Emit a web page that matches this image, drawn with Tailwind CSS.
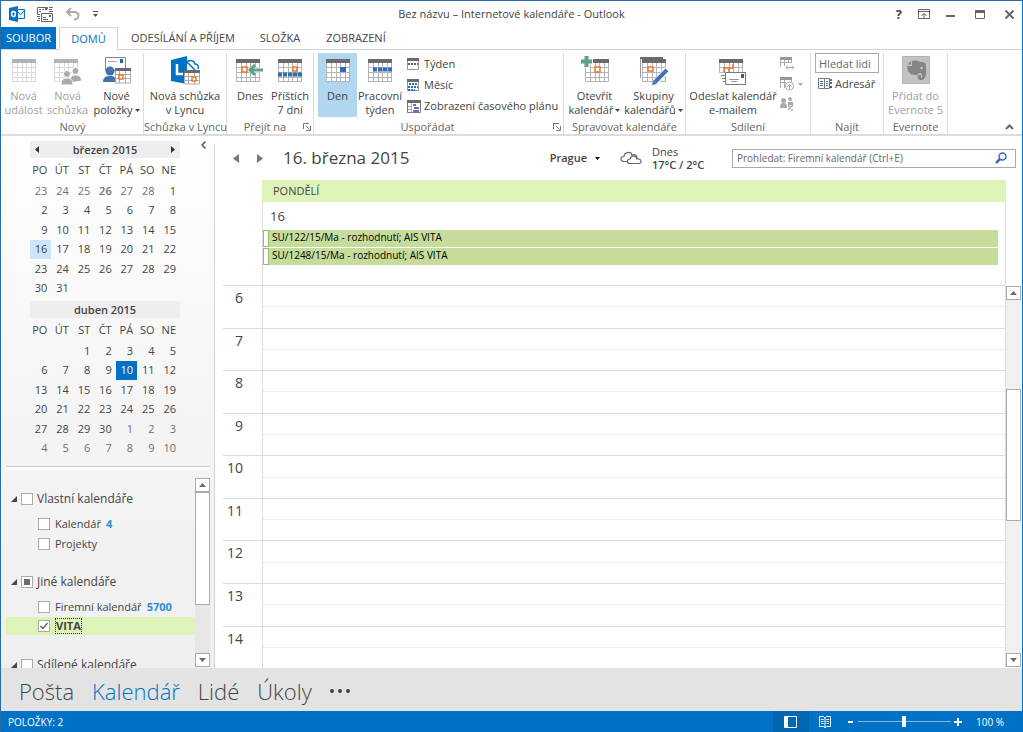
<!DOCTYPE html>
<html lang="cs">
<head>
<meta charset="utf-8">
<meta name="viewport" content="width=device-width, initial-scale=1">
<title>Bez názvu – Internetové kalendáře - Outlook</title>
<script src="https://cdn.jsdelivr.net/npm/@tailwindcss/browser@4"></script>
</head>
<body class="font-['Open_Sans','Noto_Sans',sans-serif] text-[11px] leading-[14px] text-[#444444]">
<svg class="hidden" aria-hidden="true">
  <symbol id="cal" viewBox="0 0 24 24">
    <path fill="#fff" d="M0 0h24v23H0z"/>
    <path fill="none" stroke="#b4b4b4" d="M.5 4v18.500h23V4M0 8.500h24M0 13.500h24M0 18.500h24M5.500 4v18M10.500 4v18M14.500 4v18M19.500 4v18"/>
    <path fill="#6a6a6a" d="M0 0h24v4H0z"/>
  </symbol>
  <symbol id="calsm" viewBox="0 0 12 12">
    <path fill="#fff" d="M0 0h12v12H0z"/>
    <path fill="none" stroke="#999" d="M.5 2v9.500h11V2"/>
    <path fill="#6a6a6a" d="M0 0h12v3H0z"/>
  </symbol>
  <symbol id="caret" viewBox="0 0 5 3"><path fill="currentColor" d="M0 0h5L2.500 3z"/></symbol>
  <symbol id="up" viewBox="0 0 7 4"><path fill="#6b6b6b" d="M0 4h7L3.500 0z"/></symbol>
  <symbol id="down" viewBox="0 0 7 4"><path fill="#6b6b6b" d="M0 0h7L3.500 4z"/></symbol>
  <symbol id="tree" viewBox="0 0 6 6"><path fill="#444" d="M6 0v6H0z"/></symbol>
  <symbol id="launch" viewBox="0 0 8 8"><path fill="none" stroke="#777" d="M.5 6V.5H6M3 3l3.500 3.500M7.500 3v4.500H3"/></symbol>
</svg>

<div class="flex h-screen flex-col overflow-hidden border border-b-0 border-[#2b6ca8] border-r-[#0072c6] bg-white">
  <!-- Title bar -->
  <header class="grid h-[26px] shrink-0 grid-cols-[1fr_auto_1fr] items-center">
    <div class="flex items-center pl-2 gap-3">
      <svg class="size-4" viewBox="0 0 16 16"><path fill="#fff" stroke="#0072c6" d="M8.500 3.500h7v9h-7"/><path fill="none" stroke="#0072c6" d="M9 6l2.500 3L15.500 4"/><path fill="#0072c6" d="M0 2l9-2v16l-9-2z"/><ellipse cx="4.500" cy="8" rx="1.900" ry="2.600" fill="none" stroke="#fff" stroke-width="1.500"/></svg>
      <button class="cursor-pointer" aria-label="Odeslat a přijmout"><svg class="size-4" viewBox="0 0 16 16" fill="none" stroke="#666"><path d="M3 8.500H.5v-7h10V3"/><path d="M2 3.500h2M5 3.500h2M2 5.500h2M4.500 15.500v-8h11v8zM6 13.500h5M6 11.500h3M12 1.500h4M12 3.500h3M12 5.500h4M0 10.500h3M1 12.500h2M0 14.500h3"/><path fill="#666" stroke="none" d="M12 9h2v2h-2zM8 2h2v2H8z"/></svg></button>
      <button class="cursor-pointer" aria-label="Zpět"><svg class="h-4 w-4" viewBox="0 0 16 16" fill="none" stroke="#ababab" stroke-width="2"><path d="M6 2L2 6l4 4M2.500 6H9c3 0 4.500 1.500 4.500 3.500S12 13.500 9 13.500"/></svg></button>
      <button class="cursor-pointer" aria-label="Přizpůsobit panel"><svg class="h-[6px] w-[5px]" viewBox="0 0 5 6"><path fill="#555" d="M0 0h5v1H0zM0 3h5L2.500 6z"/></svg></button>
    </div>
    <h1 class="text-[11px]">Bez názvu – Internetové kalendáře - Outlook</h1>
    <div class="flex items-center justify-end gap-4 pr-2">
      <button class="text-[13px] font-bold" aria-label="Nápověda">?</button>
      <button aria-label="Zobrazení pásu karet"><svg class="h-[10px] w-3" viewBox="0 0 12 10"><path fill="none" stroke="#666" d="M.5.5h11v9H.5zM.5 2.500h11M6 9V5M3.500 6.500L6 4.500l2.500 2"/></svg></button>
      <button aria-label="Minimalizovat"><svg class="h-[10px] w-[9px]" viewBox="0 0 9 10"><path fill="#666" d="M0 6h9v2H0z"/></svg></button>
      <button class="ml-1" aria-label="Maximalizovat"><svg class="h-[9px] w-[10px]" viewBox="0 0 10 9"><path fill="none" stroke="#666" d="M.5.500h9v8h-9z"/><path fill="#666" d="M0 0h10v3H0z"/></svg></button>
      <button class="ml-1" aria-label="Zavřít"><svg class="size-[9px]" viewBox="0 0 9 9"><path stroke="#666" stroke-width="2" d="M.5.500l8 8M8.500.500l-8 8"/></svg></button>
    </div>
  </header>

  <!-- Ribbon tabs -->
  <nav class="flex h-[23px] shrink-0 items-stretch border-b border-[#d4d4d4] text-[11px] whitespace-nowrap">
    <button class="w-[55px] bg-[#0072c6] text-white">SOUBOR</button>
    <button class="-mb-px ml-[3px] w-[59px] border border-b-0 border-[#d4d4d4] bg-white text-[#0072c6]">DOMŮ</button>
    <button class="ml-[10px] w-[110px]">ODESÍLÁNÍ A PŘÍJEM</button>
    <button class="ml-4 w-[52px]">SLOŽKA</button>
    <button class="ml-4 w-[68px]">ZOBRAZENÍ</button>
  </nav>

  <!-- Ribbon -->
  <section class="flex h-[86px] shrink-0 border-b-2 border-[#dcdcdc] pt-[3px] pl-px" aria-label="Pás karet">
    <div class="flex w-[142px] shrink-0 flex-col justify-between border-r border-[#dcdcdc]">
      <div class="flex justify-center gap-1 whitespace-nowrap text-[#a0a0a0]">
        <button class="flex w-[38px] flex-col items-center pt-[6px]"><svg class="mb-[3px] h-[27px] w-6 opacity-50" viewBox="0 0 24 27"><use href="#cal" width="24" height="24"/></svg>Nová<br>událost</button>
        <button class="flex w-[42px] flex-col items-center pt-[6px]"><svg class="mb-[3px] h-[27px] w-7" viewBox="0 0 28 27"><use href="#cal" width="24" height="24" opacity=".5"/><g fill="#aaa" stroke="#fff"><circle cx="21.500" cy="12" r="3.500"/><path d="M15.500 24c0-6 2-8 6-8s6 2 6 6z"/><circle cx="13" cy="15" r="3.500"/><path d="M7 26c0-5 2-7 6-7s6 2 6 7z"/></g></svg>Nová<br>schůzka</button>
        <button class="flex w-12 flex-col items-center pt-[3px] text-[#444]"><svg class="mb-[3px] h-[30px] w-7" viewBox="0 0 28 30"><path fill="#fff" stroke="#888" d="M2.500 1.500h20v13h-20z"/><path stroke="#aaa" d="M5 5.500h9"/><path fill="#2a5fa8" d="M17 3h3v4h-3z"/><circle cx="7" cy="15" r="4.500" fill="#4472b0"/><path fill="#4472b0" d="M0 26c0-5 3-6 7-6s6 1 6 6z"/><path fill="#fff" stroke="#aaa" d="M12.500 14v13h15V14M12 18.500h16M12 22.500h16M16.500 14v13M22.500 14v13"/><path fill="#6a6a6a" d="M12 12h16v3H12z"/><path fill="#fff" stroke="#e8772e" stroke-width="1.500" d="M16 19h4v4h-4z"/></svg>Nové<span class="flex items-center gap-[2px]">položky <svg class="h-[3px] w-[5px]"><use href="#caret"/></svg></span></button>
      </div>
      <h2 class="text-center text-[#666]">Nový</h2>
    </div>
    <div class="flex w-[83px] shrink-0 flex-col justify-between border-r border-[#dcdcdc] whitespace-nowrap">
      <button class="flex flex-col items-center pt-[3px]"><svg class="mb-[2px] h-[31px] w-8" viewBox="0 0 32 31"><path fill="none" stroke="#0072c6" stroke-width="1.500" d="M17 8c2-5 8-4 9 0 3 0 4 3 3 5M18 6l8 8"/><path fill="#0072c6" d="M2 4l16-4v28L2 25z"/><path fill="none" stroke="#fff" stroke-width="2.500" d="M8 8v10h6"/><path fill="#fff" stroke="#aaa" d="M15.500 16v12h15V16M15 20.500h16M15 24.500h16M19.500 16v12M25.500 16v12"/><path fill="#6a6a6a" d="M15 14h16v3H15z"/><path fill="#fff" stroke="#e8772e" stroke-width="1.500" d="M23 21h4v4h-4z"/></svg>Nová schůzka<br>v Lyncu</button>
      <h2 class="text-center text-[#666]">Schůzka v Lyncu</h2>
    </div>
    <div class="flex w-[87px] shrink-0 flex-col justify-between border-r border-[#dcdcdc] whitespace-nowrap">
      <div class="flex justify-center gap-1 pl-1">
        <button class="flex w-8 flex-col items-center pt-[6px]"><svg class="mb-[3px] h-[27px] w-7" viewBox="0 0 28 27"><use href="#cal" width="24" height="24"/><path fill="#fff" stroke="#e8772e" stroke-width="1.500" d="M6 8h5v5H6z"/><path fill="none" stroke="#fff" stroke-width="5" d="M13 11h15"/><path fill="none" stroke="#5f9f82" stroke-width="3" d="M14 11h13M19 6l-5 5 5 5"/></svg>Dnes</button>
        <button class="flex w-10 flex-col items-center pt-[6px]"><svg class="mb-[3px] h-[27px] w-6" viewBox="0 0 24 27"><use href="#cal" width="24" height="24"/><path fill="#fff" stroke="#e8772e" stroke-width="1.500" d="M15 8h4v4h-4z"/><path stroke="#2b6cb5" stroke-width="4" stroke-dasharray="4 1" d="M0 15.500h24"/></svg>Příštích<br>7 dní</button>
      </div>
      <div class="flex items-center pr-[2px]"><h2 class="flex-1 text-center text-[#666]">Přejít na</h2><button aria-label="Další možnosti"><svg class="size-2"><use href="#launch"/></svg></button></div>
    </div>
    <div class="flex w-[250px] shrink-0 flex-col justify-between border-r border-[#dcdcdc] whitespace-nowrap">
      <div class="flex pl-1">
        <button class="flex h-16 w-[39px] flex-col items-center bg-[#b1d6f0] pt-[6px]"><svg class="mb-[3px] h-[27px] w-6" viewBox="0 0 24 27"><use href="#cal" width="24" height="24"/><path fill="#2b6cb5" d="M14 8h6v5h-6z"/></svg>Den</button>
        <button class="flex w-[46px] flex-col items-center pt-[6px]"><svg class="mb-[3px] h-[27px] w-6" viewBox="0 0 24 27"><use href="#cal" width="24" height="24"/><path stroke="#2b6cb5" stroke-width="4" stroke-dasharray="4 1" d="M5 10.500h19"/></svg>Pracovní<br>týden</button>
        <div class="ml-1 flex flex-col gap-[7px] pt-1">
          <button class="flex items-center gap-[5px]"><svg class="size-3" viewBox="0 0 12 12"><use href="#calsm"/><path stroke="#2b6cb5" stroke-width="2" stroke-dasharray="2 1" d="M1 6h10"/></svg>Týden</button>
          <button class="flex items-center gap-[5px]"><svg class="size-3" viewBox="0 0 12 12"><use href="#calsm"/><path stroke="#2b6cb5" stroke-width="2" stroke-dasharray="2 1" d="M2 5h9M1 8h10M1 11h7"/></svg>Měsíc</button>
          <button class="flex items-center gap-[3px]"><svg class="h-[13px] w-[14px]" viewBox="0 0 14 13"><path fill="#fff" stroke="#777" d="M.5.500h13v12H.5z"/><path fill="#6a6a6a" d="M0 0h14v3H0z"/><path stroke="#aaa" d="M4.500 3v10M1 6.500h3M1 9.500h3"/><path stroke="#7c68b0" stroke-width="2" d="M6 5h3M7 8h5M6 11h6"/></svg>Zobrazení časového plánu</button>
        </div>
      </div>
      <div class="flex items-center pr-[2px]"><h2 class="flex-1 pr-3 text-center text-[#666]">Uspořádat</h2><button aria-label="Další možnosti"><svg class="size-2"><use href="#launch"/></svg></button></div>
    </div>
    <div class="flex w-[122px] shrink-0 flex-col justify-between border-r border-[#dcdcdc] whitespace-nowrap">
      <div class="flex justify-center gap-1">
        <button class="flex w-[54px] flex-col items-center pt-[3px]"><svg class="mb-[3px] h-[30px] w-7" viewBox="0 0 28 30"><use href="#cal" x="4" y="3" width="24" height="24"/><path fill="#fff" stroke="#e8772e" stroke-width="1.500" d="M14 11h5v5h-5z"/><path fill="none" stroke="#fff" stroke-width="6" d="M0 5.500h12M5.500 0v12"/><path fill="none" stroke="#5f9f82" stroke-width="4" d="M0 5.500h11M5.500 0v11"/></svg>Otevřít<span class="flex items-center gap-[2px]">kalendář <svg class="h-[3px] w-[5px]"><use href="#caret"/></svg></span></button>
        <button class="flex w-14 flex-col items-center pt-[3px]"><svg class="mb-[3px] h-[30px] w-7" viewBox="0 0 28 30"><path fill="none" stroke="#999" d="M.5 22V1.500H23"/><path fill="#6a6a6a" d="M0 1h23v2H0z"/><use href="#cal" x="2" y="3" width="24" height="24"/><path fill="#fff" stroke="#e8772e" stroke-width="1.500" d="M8 11h5v4H8z"/><path stroke="#fff" stroke-width="6" d="M14 28L28 13"/><path stroke="#4472b0" stroke-width="4" d="M15 26l12-12"/><path fill="#4472b0" d="M12 29l1-5 4 4z"/></svg>Skupiny<span class="flex items-center gap-[2px]">kalendářů <svg class="h-[3px] w-[5px]"><use href="#caret"/></svg></span></button>
      </div>
      <h2 class="text-center text-[#666]">Spravovat kalendáře</h2>
    </div>
    <div class="flex w-[125px] shrink-0 flex-col justify-between border-r border-[#dcdcdc] whitespace-nowrap">
      <div class="flex pl-1">
        <button class="flex w-[86px] flex-col items-center pt-[6px]"><svg class="mb-[3px] h-[27px] w-7" viewBox="0 0 28 27"><use href="#cal" width="24" height="24"/><path fill="none" stroke="#e8772e" stroke-width="1.500" d="M5 13V9h5v4M10 9h4V5"/><path fill="#fff" d="M0 14h6v10H0z"/><path fill="#fff" stroke="#777" d="M6.500 13.500h20v12h-20z"/><path stroke="#999" d="M10 20.500h10M12 22.500h6"/><path fill="#2a5fa8" d="M22 15h3v4h-3z"/><path stroke="#888" d="M2 16.500h4M3 19.500h3M4 22.500h2"/></svg>Odeslat kalendář<br>e-mailem</button>
        <div class="flex flex-col items-start gap-[6px] pl-1 pt-1 text-[#aaa]">
          <button aria-label="Sdílet kalendář"><svg class="size-[14px]" viewBox="0 0 14 14" fill="none" stroke="#aaa"><path d="M.5 10V1.500h11V6M1 5.500h11M4.500 3v6M8.500 3v3M6 10.500h8M8 8.500l-2 2 2 2M12 8.500l2 2-2 2"/><path fill="#999" stroke="none" d="M0 0h12v3H0z"/></svg></button>
          <button class="flex items-center gap-1" aria-label="Publikovat online"><svg class="size-[14px]" viewBox="0 0 14 14" fill="none" stroke="#aaa"><path d="M.5 11V1.500h11V5M1 5.500h5M4.500 3v8"/><path fill="#999" stroke="none" d="M0 0h12v3H0z"/><circle cx="9.500" cy="9" r="4"/><path d="M7.500 9.500l2-2 2 2M9.500 8v4"/></svg><svg class="h-[3px] w-[5px]"><use href="#caret"/></svg></button>
          <button aria-label="Oprávnění kalendáře"><svg class="size-[14px]" viewBox="0 0 14 14" fill="#aaa"><circle cx="3.500" cy="3.500" r="2.500"/><path d="M0 11c0-4 1-5 3.500-5S7 7 7 11z"/><circle cx="10" cy="2" r="2"/><path d="M8 5h5v3H8z"/><path fill="none" stroke="#aaa" stroke-width="1.500" d="M8 13l5-5M8 9h2M11 13h2"/></svg></button>
        </div>
      </div>
      <h2 class="text-center text-[#666]">Sdílení</h2>
    </div>
    <div class="flex w-[73px] shrink-0 flex-col justify-between border-r border-[#dcdcdc] whitespace-nowrap">
      <div class="flex flex-col items-start gap-1 px-1">
        <input class="h-5 w-full border border-[#ababab] px-[3px] placeholder:text-[#666]" aria-label="Hledat lidi" placeholder="Hledat lidi">
        <button class="flex items-center gap-[3px] pl-[3px]"><svg class="h-3 w-[14px]" viewBox="0 0 14 12"><path fill="#fff" stroke="#777" d="M.5.500h6v10h-6zM6.500.500h5v10h-5z"/><path stroke="#3e6db5" d="M2 3.500h3M2 5.500h3M2 7.500h3M8 3.500h2M8 5.500h2M8 7.500h2"/><path fill="#c0504d" d="M12 1h2v2h-2z"/><path fill="#3e6db5" d="M12 4h2v2h-2z"/><path fill="#555" d="M12 8h2v2h-2z"/></svg>Adresář</button>
      </div>
      <h2 class="text-center text-[#666]">Najít</h2>
    </div>
    <div class="flex w-16 shrink-0 flex-col justify-between border-r border-[#dcdcdc] whitespace-nowrap">
      <button class="flex flex-col items-center pt-[3px] text-[#a0a0a0]"><svg class="mb-[5px] size-7" viewBox="0 0 28 28"><path fill="#c2c2c2" stroke="#b2b2b2" d="M.5.500h27v27H.5z"/><path fill="#858585" d="M5 10h5V5c4-1 7 0 8 1 5 0 6 1 6 4 1 8-1 14-4 14-4 0-5-2-4-5h3v3c2 0 2-5-1-5-2 0-2 2-3 2-5 0-9 0-10-9zM5.500 8.500L9 5v3.500z"/><circle cx="19.500" cy="12" r="1.200" fill="#ccc"/></svg>Přidat do<br>Evernote 5</button>
      <h2 class="text-center text-[#666]">Evernote</h2>
    </div>
    <div class="flex flex-1 items-end justify-end p-2 pb-1"><button aria-label="Sbalit pás karet"><svg class="h-[6px] w-[9px]" viewBox="0 0 9 6"><path fill="none" stroke="#666" stroke-width="2" d="M1 5l3.500-3.500L8 5"/></svg></button></div>
  </section>

  <!-- Workspace -->
  <div class="flex min-h-0 flex-1">
    <aside class="flex w-[213px] shrink-0 flex-col bg-linear-to-b from-white via-[#f5f5f5] to-[#efefef]">
      <div class="flex items-start">
        <div id="minis" class="ml-[29px] mt-[5px] flex w-[150px] flex-col gap-[3px]"></div>
        <button class="ml-auto mr-2 mt-[5px]" aria-label="Sbalit podokno"><svg class="h-2 w-[5px]" viewBox="0 0 5 8"><path fill="none" stroke="#555" stroke-width="1.500" d="M4.500.500L1 4l3.500 3.500"/></svg></button>
      </div>
      <hr class="ml-[5px] mr-1 mt-2 h-1 border-t border-[#c8c8c8] bg-white">
      <div class="ml-[5px] mr-1 mt-2 flex min-h-0 flex-1">
        <div class="min-w-0 flex-1 overflow-hidden pt-[13px]">
          <section>
            <label class="flex h-4 items-center gap-1 pl-[5px] text-[12px]"><svg class="size-[6px]"><use href="#tree"/></svg><input type="checkbox" class="size-3 appearance-none border border-[#ababab] bg-white">Vlastní kalendáře</label>
            <ul class="mt-[7px] pl-8">
              <li><label class="flex h-5 items-center gap-[5px]"><input type="checkbox" class="size-3 appearance-none border border-[#ababab] bg-white">Kalendář <b class="text-[#2a8dd4]">4</b></label></li>
              <li><label class="flex h-5 items-center gap-[5px]"><input type="checkbox" class="size-3 appearance-none border border-[#ababab] bg-white">Projekty</label></li>
            </ul>
          </section>
          <section class="mt-5">
            <label class="flex h-4 items-center gap-1 pl-[5px] text-[12px]"><svg class="size-[6px]"><use href="#tree"/></svg><span class="grid size-3 place-items-center"><input type="checkbox" class="col-start-1 row-start-1 size-3 appearance-none border border-[#ababab] bg-white"><i class="z-10 col-start-1 row-start-1 size-[6px] bg-[#6b6b6b]"></i></span>Jiné kalendáře</label>
            <ul class="mt-[7px]">
              <li><label class="flex h-5 items-center gap-[5px] pl-8"><input type="checkbox" class="size-3 appearance-none border border-[#ababab] bg-white">Firemní kalendář <b class="text-[#2a8dd4]">5700</b></label></li>
              <li><label class="flex h-[18px] items-center gap-[5px] bg-[#ddf3b8] pl-8"><span class="grid size-3 place-items-center"><input type="checkbox" checked class="col-start-1 row-start-1 size-3 appearance-none border border-[#ababab] bg-white"><svg class="z-10 col-start-1 row-start-1 size-2" viewBox="0 0 8 8"><path fill="none" stroke="#555" stroke-width="1.200" d="M.5 4L3 6.500 7.500 1"/></svg></span><b class="border border-dotted border-[#333]">VITA</b></label></li>
            </ul>
          </section>
          <section class="mt-5">
            <label class="flex h-5 items-center gap-1 pl-[5px] text-[12px]"><svg class="size-[6px]"><use href="#tree"/></svg><input type="checkbox" class="size-3 appearance-none border border-[#ababab] bg-white">Sdílené kalendáře</label>
          </section>
        </div>
        <div class="mb-px flex w-[15px] shrink-0 flex-col bg-[#e6e6e6]">
          <button class="grid h-[14px] shrink-0 place-items-center border border-[#ababab] bg-white" aria-label="Nahoru"><svg class="h-1 w-[7px]"><use href="#up"/></svg></button>
          <div class="flex-[112] border border-[#ababab] bg-white"></div><div class="flex-[49]"></div>
          <button class="grid h-[14px] shrink-0 place-items-center border border-[#ababab] bg-white" aria-label="Dolů"><svg class="h-1 w-[7px]"><use href="#down"/></svg></button>
        </div>
      </div>
    </aside>
    <div class="mt-2 w-px shrink-0 bg-[#d4d4d4]"></div>

    <main class="ml-2 flex min-w-0 flex-1 flex-col">
      <div class="flex h-11 shrink-0 items-center pl-[10px] pr-[6px]">
        <button aria-label="Předchozí den"><svg class="h-[9px] w-[6px]" viewBox="0 0 6 9"><path fill="#777" d="M6 0v9L0 4.500z"/></svg></button>
        <button class="ml-[18px]" aria-label="Další den"><svg class="h-[9px] w-[6px]" viewBox="0 0 6 9"><path fill="#777" d="M0 0v9l6-4.500z"/></svg></button>
        <h2 class="ml-5 flex-1 text-[17px] leading-6">16. března 2015</h2>
        <button class="flex items-center gap-2 font-semibold">Prague <svg class="h-[3px] w-[5px] text-black"><use href="#caret"/></svg></button>
        <svg class="ml-5 h-[14px] w-[22px]" viewBox="0 0 22 14"><path fill="none" stroke="#666" stroke-width="1.200" d="M8 10.500H4c-4 0-4-5 0-5C4 1 11 0 12 4c3-1 5 0 5 3M10 12.500c-3 0-4-4 0-4.500 1-4 6-4 7 0 5-1 5 4.500 2 4.500z"/></svg>
        <div class="ml-[10px] w-[80px] leading-[13px]">Dnes<br><b class="font-semibold">17°C / 2°C</b></div>
        <label class="flex h-[19px] w-[284px] items-center border border-[#ababab] pl-1 pr-2"><span class="hidden">Prohledat</span>
          <input class="h-full min-w-0 flex-1 text-[10px] outline-none placeholder:text-[#666]" aria-label="Prohledat" placeholder="Prohledat: Firemní kalendář (Ctrl+E)">
          <svg class="size-3" viewBox="0 0 12 12"><circle cx="7.500" cy="4.500" r="3.500" fill="none" stroke="#3e6db5" stroke-width="1.500"/><path stroke="#3e6db5" stroke-width="2.500" d="M5 7L1 11"/></svg></label>
      </div>
      <div class="mr-4 flex h-[105px] shrink-0">
        <div class="w-[39px] shrink-0"></div>
        <div class="flex-1 border-x border-[#dcdcdc]">
          <h3 class="-mx-px flex h-[22px] items-center bg-[#ddf3b8] pl-[11px]">PONDĚLÍ</h3>
          <p class="flex h-7 items-center pl-[7px] text-[13px]">16</p>
          <div class="mr-[7px] flex flex-col gap-px text-[10px] text-black">
            <button class="flex h-[17px] bg-[#c6dc9a] text-left leading-[14px]"><i class="mr-[3px] h-[17px] w-[6px] border border-[#9cb86c] bg-white"></i>SU/122/15/Ma - rozhodnutí; AIS VITA</button>
            <button class="flex h-[17px] bg-[#c6dc9a] text-left leading-[14px]"><i class="mr-[3px] h-[17px] w-[6px] border border-[#9cb86c] bg-white"></i>SU/1248/15/Ma - rozhodnutí; AIS VITA</button>
          </div>
        </div>
      </div>
      <div class="flex min-h-0 flex-1">
        <div id="hours" class="flex flex-1 flex-col"></div>
        <div class="mt-px mb-px mr-px flex w-[15px] shrink-0 flex-col bg-[#f0f0f0]">
          <button class="grid h-[14px] shrink-0 place-items-center border border-[#ababab] bg-white" aria-label="Nahoru"><svg class="h-1 w-[7px]"><use href="#up"/></svg></button>
          <div class="flex-[89]"></div><div class="flex-[131] border border-[#ababab] bg-white"></div><div class="flex-[133]"></div>
          <button class="grid h-[14px] shrink-0 place-items-center border border-[#ababab] bg-white" aria-label="Dolů"><svg class="h-1 w-[7px]"><use href="#down"/></svg></button>
        </div>
      </div>
    </main>
  </div>

  <!-- Module switcher -->
  <nav class="flex h-[43px] shrink-0 items-center gap-[18px] bg-[#e3e3e3] pl-[18px] pt-[2px] text-[22px] font-light leading-8 text-[#444]">
    <a href="#posta">Pošta</a><a href="#kalendar" class="text-[#0072c6]">Kalendář</a><a href="#lide">Lidé</a><a href="#ukoly">Úkoly</a>
    <button aria-label="Další"><svg class="h-1 w-5" viewBox="0 0 20 4" fill="#444"><circle cx="2" cy="2" r="2"/><circle cx="10" cy="2" r="2"/><circle cx="18" cy="2" r="2"/></svg></button>
  </nav>
  <footer class="-mx-px flex h-[21px] shrink-0 items-center bg-[#0072c6] pl-2 pr-[19px] text-[10px] text-white">
    <span class="flex-1">POLOŽKY: 2</span>
    <button class="grid h-full w-9 place-items-center bg-[#0067b0]" aria-label="Normální"><svg class="h-3 w-[13px]" viewBox="0 0 13 12"><path fill="none" stroke="#fff" d="M.5.500h12v11H.5z"/><path fill="#fff" d="M1 1h3v10H1z"/></svg></button>
    <button class="ml-[10px]" aria-label="Čtení"><svg class="h-3 w-3" viewBox="0 0 12 12"><path fill="none" stroke="#fff" d="M.5.500h4L6 2l1.500-1.500h4v10h-4L6 12l-1.500-1.500h-4zM6 2v10M2 3.500h2.500M2 5.500h2.500M2 7.500h2.500M7.500 3.500H10M7.500 5.500H10M7.500 7.500H10"/></svg></button>
    <button class="ml-4" aria-label="Oddálit"><svg class="h-[8px] w-[7px]"><path fill="#fff" d="M1 3h5v2H1z"/></svg></button>
    <input type="range" aria-label="Lupa" class="ml-1 h-[11px] w-[93px] appearance-none bg-linear-to-b from-transparent from-45% via-white via-45% to-transparent to-55% [&::-webkit-slider-thumb]:h-[11px] [&::-webkit-slider-thumb]:w-1 [&::-webkit-slider-thumb]:appearance-none [&::-webkit-slider-thumb]:bg-white">
    <button class="ml-[3px]" aria-label="Přiblížit"><svg class="size-2"><path fill="#fff" d="M0 3h8v2H0zM3 0h2v8H3z"/></svg></button>
    <span class="ml-[14px]">100 %</span>
  </footer>
</div>

<script>
const range = (a, b) => Array.from({length: b - a + 1}, (_, i) => a + i);
const months = [
  {name: 'březen 2015', nav: true, lead: range(23, 28), days: 31, trail: 0, bold: 26, selected: 16},
  {name: 'duben 2015', nav: false, lead: ['', ''], days: 30, trail: 10, today: 10}
];
const left = '<button aria-label="Předchozí měsíc"><svg class="h-[7px] w-1" viewBox="0 0 4 7"><path d="M4 0v7L0 3.500z" fill="#333"/></svg></button>';
const right = '<button aria-label="Další měsíc"><svg class="h-[7px] w-1" viewBox="0 0 4 7"><path d="M0 0v7l4-3.500z" fill="#333"/></svg></button>';
document.getElementById('minis').innerHTML = months.map(m => {
  const cells = [
    ...m.lead.map(d => `<td class="pr-1 text-[#707070] ${d === m.bold ? 'font-semibold' : ''}">${d}</td>`),
    ...range(1, m.days).map(d => `<td class="pr-1 ${d === m.selected ? 'bg-[#cde6f7]' : d === m.today ? 'bg-[#0072c6] text-white' : ''}">${d}</td>`),
    ...range(1, m.trail).map(d => `<td class="pr-1 text-[#707070]">${d}</td>`)
  ];
  while (cells.length < 42) cells.push('<td></td>');
  const rows = range(0, 5).map(r => `<tr>${cells.slice(r * 7, r * 7 + 7).join('')}</tr>`).join('');
  return `<div><div class="flex h-[17px] items-center bg-[#eeeeee] px-[5px]">${m.nav ? left : ''}<h3 class="flex-1 text-center font-semibold">${m.name}</h3>${m.nav ? right : ''}</div>
  <table class="h-[140px] w-full table-fixed border-collapse text-right"><thead><tr class="h-[23px]">${['PO','ÚT','ST','ČT','PÁ','SO','NE'].map(d => `<th class="pr-1 font-normal">${d}</th>`).join('')}</tr></thead><tbody>${rows}</tbody></table></div>`;
}).join('');
document.getElementById('hours').innerHTML = range(6, 14).map(h => `<div class="flex flex-1 border-t border-[#dcdcdc]">
  <div class="w-[39px] shrink-0 pr-[19px] pt-[3px] text-right text-[14px] leading-[18px]">${h}</div>
  <div class="flex flex-1 flex-col border-x border-[#dcdcdc]"><div class="flex-1 border-b border-dotted border-[#e4e4e4]"></div><div class="flex-1"></div></div></div>`).join('');
</script>
</body>
</html>
